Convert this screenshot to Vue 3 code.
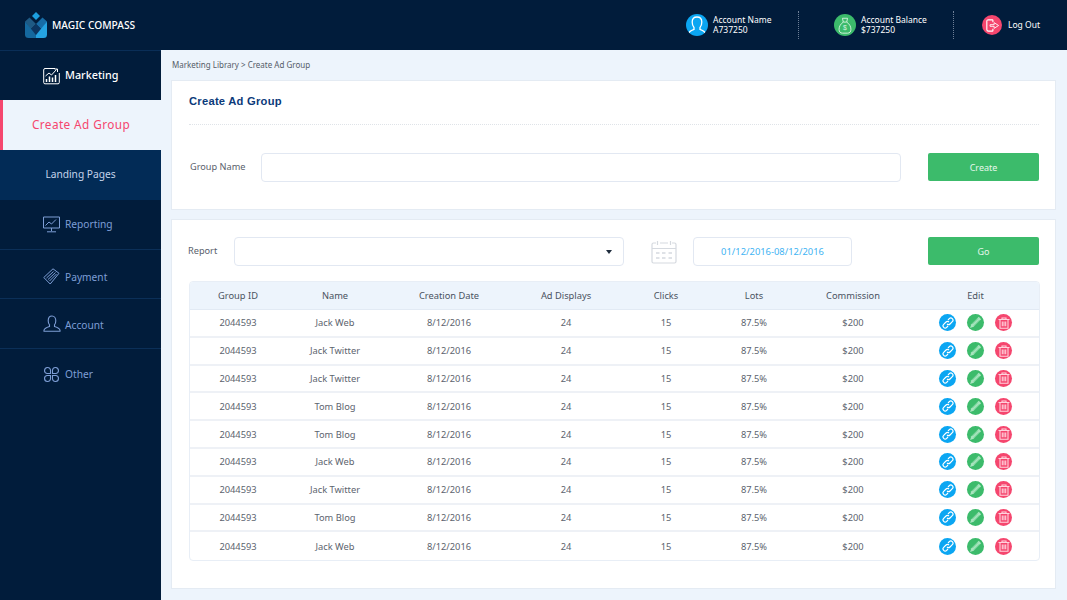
<script setup>
const columns = ['Group ID', 'Name', 'Creation Date', 'Ad Displays', 'Clicks', 'Lots', 'Commission', 'Edit']
const names = ['Jack Web', 'Jack Twitter', 'Jack Twitter', 'Tom Blog', 'Tom Blog', 'Jack Web', 'Jack Twitter', 'Tom Blog', 'Jack Web']
</script>

<template>
  <div class="page">
    <header class="topbar">
      <div class="brand">
        <svg class="logo" width="22" height="26" viewBox="0 0 22 26">
          <path d="M11 0l4 4-4 4-4-4z" fill="#1c9fe0" />
          <path d="M0 9.500L4.500 5.500 11 12l-5.500 5.500z" fill="#1f5a84" />
          <path d="M22 9.500L17.500 5.500 11 12l5.500 5.500z" fill="#176ca6" />
          <path d="M11 12l5.500 5.500L11 23l-5.500-5.500z" fill="#0c3560" />
          <path d="M0 9.500l11 13.500V26H3.500Q0 26 0 22.500z" fill="#15689e" />
          <path d="M22 9.500L11 23v3h7.500q3.500 0 3.500-3.500z" fill="#25a3e2" />
        </svg>
        <span>MAGIC COMPASS</span>
      </div>
      <div class="account">
        <div class="acct acct-name">
          <span class="round blue">
            <svg width="22" height="22" viewBox="0 0 22 22" fill="none" stroke="#fff" stroke-width="1.300">
              <path d="M2.500 20c.5-3 2.500-3.500 5.500-4.500v-2C6.500 12 6.200 10 6.200 8c0-3 2-5 4.800-5s4.800 2 4.800 5c0 2-.3 4-1.800 5.500v2c3 1 5 1.500 5.500 4.500" />
            </svg>
          </span>
          <div class="stack"><span>Account Name</span><span>A737250</span></div>
        </div>
        <div class="acct acct-balance">
          <span class="round green">
            <svg width="14" height="17" viewBox="0 0 16 20" fill="none" stroke="#d6f3e0" stroke-width="1.100">
              <path d="M5 1.500h6L10 6H6zM6 6C3 8 1 11 1 14.500 1 17.500 2.500 19 5 19h6c2.500 0 4-1.500 4-4.500C15 11 13 8 10 6" />
              <text x="8" y="15.500" font-size="8" font-family="Liberation Sans" text-anchor="middle" fill="#d6f3e0" stroke="none">$</text>
            </svg>
          </span>
          <div class="stack"><span>Account Balance</span><span>$737250</span></div>
        </div>
        <div class="acct acct-out">
          <span class="round pink out-icon">
            <svg width="13" height="13" viewBox="0 0 16 16" fill="none" stroke="#fff" stroke-width="1.400">
              <path d="M8.500 1H3Q1 1 1 3v10q0 2 2 2h5.500M8.500 1v3M8.500 15v-3" />
              <path d="M5 7h5V4.500L15.500 8 10 11.500V9H5z" fill="none" stroke-width="1.100" />
            </svg>
          </span>
          <span>Log Out</span>
        </div>
      </div>
    </header>

    <div class="body">
      <aside class="sidebar">
        <div class="nav nav-head">
          <svg width="17" height="18" viewBox="0 0 17 18" fill="none" stroke="#fff" stroke-width="1">
            <path d="M12 1.500H2Q.7 1.500.7 3v12.500q0 1.300 1.300 1.300h13q1.300 0 1.300-1.300V6" />
            <path d="M2.500 9l3.500-3 2.500 2 5-5.500" />
            <path d="M11.500 2h3v3" />
            <path d="M3.500 15v-3M6.500 15V9.500M9.500 15v-4.500M12.500 15V8" stroke-width="1.500" />
          </svg>
          <span>Marketing</span>
        </div>
        <div class="nav nav-active">Create Ad Group</div>
        <div class="nav nav-sub">Landing Pages</div>
        <div class="nav nav-item">
          <svg width="17" height="17" viewBox="0 0 17 17" fill="none" stroke="#7e9ed6" stroke-width="1">
            <path d="M.5 1h16v11H.5zM8.500 12v3M4 15.800h9" />
            <path d="M2.500 9.500l3.500-3.500 2.500 2 4.500-4.500" />
          </svg>
          <span>Reporting</span>
        </div>
        <div class="nav nav-item nav-pay">
          <svg width="17" height="17" viewBox="0 0 17 17" fill="none" stroke="#7e9ed6" stroke-width="1">
            <path d="M.8 9.500L10 .8l6 4.500-8.800 10.700z" />
            <path d="M3.500 10l7-6.500M5 11.500l7.500-7M6.500 13l7-7" />
          </svg>
          <span>Payment</span>
        </div>
        <div class="nav nav-item nav-acc">
          <svg width="18" height="17" viewBox="0 0 18 17" fill="none" stroke="#7e9ed6" stroke-width="1.100">
            <path d="M1 16.300h16v-1c0-2-3-3-5.500-3.800v-1.700c1-1 1.300-2.500 1.300-4C12.800 3 11.200 1 9 1S5.200 3 5.200 5.800c0 1.500.3 3 1.300 4v1.700C4 12.300 1 13.300 1 15.300z" />
          </svg>
          <span>Account</span>
        </div>
        <div class="nav nav-item nav-last">
          <svg width="17" height="17" viewBox="0 0 17 17" fill="none" stroke="#7e9ed6" stroke-width="1.100">
            <path d="M7.500 7.500H4A3 3 0 1 1 7.500 4zM9.500 7.500H13A3 3 0 1 0 9.500 4zM7.500 9.500H4A3 3 0 1 0 7.500 13zM9.500 9.500H13A3 3 0 1 1 9.500 13z" />
          </svg>
          <span>Other</span>
        </div>
      </aside>

      <main class="main">
        <div class="crumb">Marketing Library &gt; Create Ad Group</div>

        <section class="card card-create">
          <h1 class="title">Create Ad Group</h1>
          <div class="form-row">
            <label class="lbl">Group Name</label>
            <div class="field field-name"></div>
            <button class="btn">Create</button>
          </div>
        </section>

        <section class="card card-report">
          <div class="filter-row">
            <label class="lbl lbl-report">Report</label>
            <div class="field field-report"><i class="caret"></i></div>
            <svg class="cal" width="26" height="24" viewBox="0 0 26 24" fill="none" stroke="#d5d9df" stroke-width="1.200">
              <path d="M5 3H2.500Q1 3 1 4.500V21.500Q1 23 2.500 23h21q1.500 0 1.500-1.500V4.500Q25 3 23.500 3H21M9 3h8M6.500 1v4M19.500 1v4M1 8.500h24" />
              <path d="M5 13h3.500M11 13h3.500M17.500 13H21M5 18h3.500M11 18h3.500M17.500 18H21" stroke-width="1.500" />
            </svg>
            <div class="field field-date">01/12/2016-08/12/2016</div>
            <button class="btn">Go</button>
          </div>

          <div class="table">
            <div class="tr th">
              <div v-for="c in columns" :key="c">{{ c }}</div>
            </div>
            <div v-for="(n, i) in names" :key="i" class="tr td">
              <div>2044593</div>
              <div>{{ n }}</div>
              <div>8/12/2016</div>
              <div>24</div>
              <div>15</div>
              <div>87.5%</div>
              <div>$200</div>
              <div class="actions">
                <span class="act blue">
                  <svg width="12" height="12" viewBox="0 0 12 12" fill="none" stroke="#fff" stroke-width="1.200">
                    <path d="M5 7a2 2 0 0 0 3 0l2.300-2.300a2 2 0 0 0-3-3L6 3" />
                    <path d="M7 5a2 2 0 0 0-3 0L1.700 7.300a2 2 0 0 0 3 3L6 9" />
                  </svg>
                </span>
                <span class="act green">
                  <svg width="13" height="13" viewBox="0 0 12 12">
                    <path d="M9 .8l2.200 2.200-6.900 6.900-3.300 1.100 1.100-3.300z" fill="#a9e5bf" />
                    <path d="M3 7.500L8.200 2.300M4.500 9L9.700 3.800" stroke="#3cbb6b" stroke-width=".5" fill="none" />
                  </svg>
                </span>
                <span class="act pink">
                  <svg width="12" height="12" viewBox="0 0 12 12" fill="none" stroke="#ffd3dd" stroke-width="1.100">
                    <path d="M.5 2.500h11M4 2.500V1h4v1.500M2 2.500V11.300h8V2.500M4.300 4.500v4.800M6 4.500v4.800M7.700 4.500v4.800" />
                  </svg>
                </span>
              </div>
            </div>
          </div>
        </section>
      </main>
    </div>
  </div>
</template>

<style>
html, body { margin: 0; padding: 0; background: #edf4fc; }
</style>

<style scoped>
.page {
  width: 1067px;
  height: 600px;
  overflow: hidden;
  display: flex;
  flex-direction: column;
  font-family: "Noto Sans", "Open Sans", sans-serif;
  color: #4a5260;
  background: #edf4fc;
}
.topbar {
  flex: 0 0 50px;
  display: flex;
  justify-content: space-between;
  align-items: center;
  background: #011c3b;
  color: #fff;
}
.brand {
  display: flex;
  align-items: center;
  gap: 5px;
  padding-left: 25px;
  font-size: 10.200px;
  font-weight: 500;
}
.account { display: flex; height: 100%; align-items: center; }
.acct {
  display: flex;
  align-items: center;
  gap: 5px;
  height: 28px;
  font-size: 8.500px;
  line-height: 10px;
}
.acct-name { width: 112px; border-right: 1px dotted #6d7f97; margin-right: 35px; }
.acct-balance { width: 119px; border-right: 1px dotted #6d7f97; margin-right: 28px; }
.acct-out { width: 85px; gap: 6px; }
.stack { display: flex; flex-direction: column; }
.round {
  width: 22px;
  height: 22px;
  border-radius: 50%;
  display: flex;
  align-items: center;
  justify-content: center;
  overflow: hidden;
  flex: none;
}
.out-icon { width: 20px; height: 20px; }
.blue { background: #0ba6f2; }
.green { background: #3cbb6b; }
.pink { background: #f5466e; }

.body { flex: 1; display: flex; min-height: 0; }
.sidebar {
  flex: 0 0 161px;
  background: #011c3b;
  display: flex;
  flex-direction: column;
}
.nav {
  height: 50px;
  display: flex;
  align-items: center;
  justify-content: center;
  gap: 5px;
  font-size: 10.200px;
  box-sizing: border-box;
}
.nav span { margin-bottom: 1px; }
.nav-head {
  justify-content: flex-start;
  padding-left: 43px;
  color: #fff;
  font-size: 10.800px;
  font-weight: 500;
  border-top: 1px solid #0a2e57;
}
.nav-head span { margin-bottom: 3px; }
.nav-active {
  background: #edf4fc;
  color: #f5466e;
  font-size: 11.800px;
  letter-spacing: .4px;
  border-left: 3px solid #f5466e;
  padding: 0 2px 2px 0;
}
.nav-sub { background: #022b56; color: #c4d3ea; padding-bottom: 3px; }
.nav-item {
  justify-content: flex-start;
  padding-left: 43px;
  color: #7e9ed6;
  border-bottom: 1px solid #0b2f58;
}
.nav-pay { height: 49px; padding-top: 4px; }
.nav-pay span { margin-bottom: 0; margin-top: 1px; }
.nav-acc span { margin: 3px 0 0 -1px; }
.nav-last { border-bottom: 0; }

.main { flex: 1; padding: 0 11px 0 10px; min-width: 0; }
.crumb {
  height: 28px;
  padding-left: 1px;
  margin-bottom: 2px;
  display: flex;
  align-items: center;
  font-size: 8px;
  color: #555c68;
}
.card {
  background: #fff;
  border: 1px solid #e4ebf3;
  box-sizing: border-box;
}
.card-create { height: 130px; padding: 0 16px 0 17px; margin-bottom: 9px; }
.card-report { height: 370px; padding: 17px 15px 0 17px; }
.title {
  margin: 0;
  height: 44px;
  line-height: 41px;
  box-sizing: border-box;
  font-family: "Liberation Sans", Arial, sans-serif;
  font-size: 11.200px;
  font-weight: 700;
  color: #0b3a7a;
  border-bottom: 1px dotted #dfe3e8;
  letter-spacing: .25px;
}
.form-row { display: flex; align-items: center; margin-top: 28px; }
.lbl { font-size: 9.200px; color: #5a616c; padding-bottom: 3px; }
.form-row .lbl { width: 72px; padding-left: 1px; box-sizing: border-box; }
.field {
  height: 29px;
  box-sizing: border-box;
  border: 1px solid #e2e8f2;
  border-radius: 4px;
  background: #fff;
}
.field-name { width: 640px; margin-right: 27px; }
.btn {
  width: 111px;
  height: 28px;
  border: 0;
  border-radius: 2px;
  background: #3cbb6b;
  color: #e6f7ec;
  font: 9px "Noto Sans", "Open Sans", sans-serif;
  padding: 0;
}
.form-row .btn { margin-bottom: 1px; }
.filter-row { display: flex; align-items: center; height: 29px; }
.lbl-report { width: 46px; margin-left: -1px; }
.field-report {
  width: 390px;
  margin-right: 27px;
  position: relative;
}
.caret {
  position: absolute;
  right: 11px;
  top: 12px;
  width: 0;
  height: 0;
  border: 3px solid transparent;
  border-top: 4px solid #1f2c3d;
  border-bottom: 0;
}
.cal { margin-right: 16px; }
.field-date {
  width: 159px;
  margin-right: 76px;
  font-size: 9.400px;
  color: #3fb4f3;
  display: flex;
  align-items: center;
  justify-content: center;
}
.filter-row .btn { margin-bottom: 1px; }
.table {
  margin-top: 15px;
  border: 1px solid #e8eef6;
  border-radius: 4px;
  overflow: hidden;
  width: 851px;
  box-sizing: border-box;
}
.tr {
  display: grid;
  grid-template-columns: 96px 98px 130px 104px 96px 80px 118px 1fr;
  align-items: center;
  text-align: center;
  font-size: 9.300px;
}
.th { height: 28px; background: #edf4fc; color: #4a5260; border-bottom: 1px solid #e2eaf4; box-sizing: border-box; }
.td { height: 27.800px; color: #5c636e; border-bottom: 2px solid #eef1f6; box-sizing: border-box; }
.td:last-child { border-bottom: 0; }
.actions { display: flex; justify-content: center; gap: 11px; }
.act {
  width: 17px;
  height: 17px;
  border-radius: 50%;
  display: flex;
  align-items: center;
  justify-content: center;
}
</style>
